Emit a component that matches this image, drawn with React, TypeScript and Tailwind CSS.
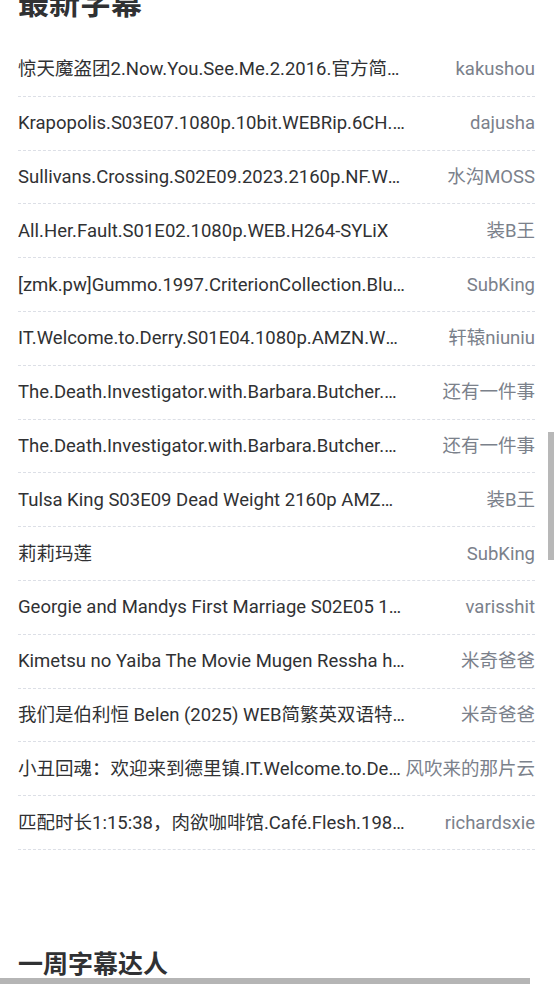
import React from "react";

const rows: [string, string][] = [
  ["惊天魔盗团2.Now.You.See.Me.2.2016.官方简体.中英双语字幕", "kakushou"],
  ["Krapopolis.S03E07.1080p.10bit.WEBRip.6CH.x265.HEVC-PSA", "dajusha"],
  ["Sullivans.Crossing.S02E09.2023.2160p.NF.WEB-DL.DDP5.1", "水沟MOSS"],
  ["All.Her.Fault.S01E02.1080p.WEB.H264-SYLiX", "装B王"],
  ["[zmk.pw]Gummo.1997.CriterionCollection.BluRay.1080p", "SubKing"],
  ["IT.Welcome.to.Derry.S01E04.1080p.AMZN.WEB-DL.DDP5.1", "轩辕niuniu"],
  ["The.Death.Investigator.with.Barbara.Butcher.S01E01", "还有一件事"],
  ["The.Death.Investigator.with.Barbara.Butcher.S01E02", "还有一件事"],
  ["Tulsa King S03E09 Dead Weight 2160p AMZN WEB-DL DDP5.1", "装B王"],
  ["莉莉玛莲", "SubKing"],
  ["Georgie and Mandys First Marriage S02E05 1080p AMZN", "varisshit"],
  ["Kimetsu no Yaiba The Movie Mugen Ressha hen 2020", "米奇爸爸"],
  ["我们是伯利恒 Belen (2025) WEB简繁英双语特效字幕", "米奇爸爸"],
  ["小丑回魂：欢迎来到德里镇.IT.Welcome.to.Derry.S01E04", "风吹来的那片云"],
  ["匹配时长1:15:38，肉欲咖啡馆.Café.Flesh.1982.1080p.BluRay", "richardsxie"],
];

const font = { fontFamily: 'Roboto, "Noto Sans CJK SC", sans-serif' };

export default function App() {
  return (
    <div className="relative h-[984px] w-[554px] overflow-hidden bg-white" style={font}>
      <div className="pl-[18px] pr-[19px]">
        <h1 className="-mt-[14px] mb-[21px] text-[31px] leading-[36px] font-bold text-[#303133]">最新字幕</h1>
        <ul className="flex flex-col">
          {rows.map(([t, u], i) => (
            <li
              key={i}
              className="flex h-[53.8px] items-center border-b border-dashed border-[#dcdfe6] text-[18.5px] leading-[26px]"
            >
              <span className="max-w-[75%] truncate text-[#303133]">{t}</span>
              <span className="ml-auto shrink-0 whitespace-nowrap pl-1 text-[#7b818b]">{u}</span>
            </li>
          ))}
        </ul>
        <h2 className="mt-[99px] text-[25px] leading-[32px] font-bold text-[#303133]">一周字幕达人</h2>
      </div>
      <div className="absolute right-0 top-[432px] h-[128px] w-[6px] bg-[#b8b8b8]" />
      <div className="absolute bottom-0 left-0 h-[6px] w-[530px] bg-[#b5b5b5]" />
    </div>
  );
}
